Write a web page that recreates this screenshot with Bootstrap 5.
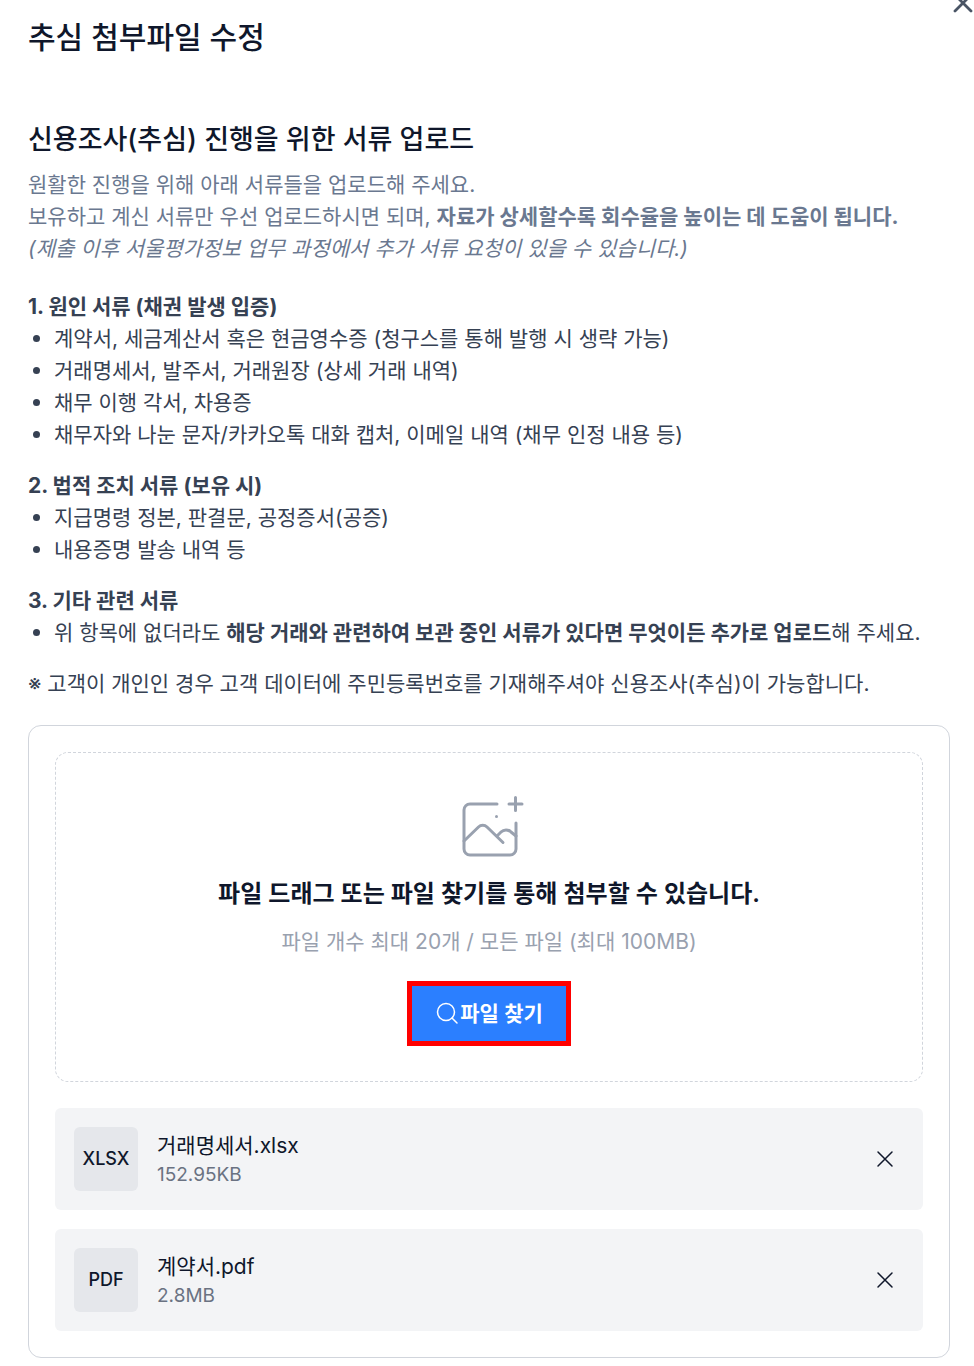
<!DOCTYPE html>
<html lang="ko">
<head>
<meta charset="utf-8">
<meta name="viewport" content="width=device-width, initial-scale=1">
<title>추심 첨부파일 수정</title>
<link rel="stylesheet" href="https://cdn.jsdelivr.net/npm/bootstrap@5.3.0/dist/css/bootstrap.min.css">
<style>
  body { font-family: Inter, "Noto Sans CJK KR", sans-serif; font-size: 21px; line-height: 32px; color: #364153; background: #fff; word-break: keep-all; }
  .page { padding: 17px 24px 8px 28px; }
  .icon-btn { padding: 0; border: 0; background: none; line-height: 0; color: #0f172b; }
  .close-page { position: absolute; top: -7px; right: 1px; color: #4a5565; }
  .page-title { font-size: 30px; line-height: 40px; font-weight: 500; color: #0f172b; margin-bottom: 63px; }
  .section-title { font-size: 27px; line-height: 40px; font-weight: 500; color: #0f172b; margin-bottom: 9px; }
  .intro { color: #6a7890; margin-bottom: 26px; }
  .doc-group { margin-bottom: 19px; }
  .doc-title { font-size: 21px; line-height: 32px; font-weight: 700; margin: 0; }
  .doc-list { list-style: none; padding-left: 26px; margin: 0; }
  .doc-list li::before { content: ""; display: inline-block; width: 7px; height: 7px; border-radius: 50%; background: currentColor; margin: 0 14px 0 -21px; vertical-align: 4px; }
  .notice { margin-bottom: 25px; }
  .upload-card { border: 1px solid #d1d5dc; border-radius: 13px; padding: 26px; }
  .drop-zone { border: 1px dashed #d1d5dc; border-radius: 13px; padding: 42px 24px 35px; margin-bottom: 26px; }
  .drop-title { font-size: 24px; line-height: 36px; font-weight: 600; color: #0f172b; margin: 17px 0 14px; }
  .drop-hint { color: #99a1af; margin-bottom: 23px; }
  .find-btn { font-size: 21px; line-height: 31px; font-weight: 600; color: #fff; background: #2b7fff; border: 5px solid #f00; border-radius: 0; padding: 12px 23px; }
  .find-btn:hover { color: #fff; background: #155dfc; border-color: #f00; }
  .file-list { gap: 19px; }
  .file-row { gap: 19px; padding: 19px 27px 19px 19px; background: #f3f4f6; border-radius: 6px; }
  .file-type { width: 64px; height: 64px; font-size: 18px; font-weight: 500; color: #0f172b; background: #e5e7eb; border-radius: 6px; }
  .file-name { line-height: 30px; color: #0f172b; }
  .file-size { font-size: 19px; line-height: 27px; color: #6a7282; }
</style>
</head>
<body>
<main class="page position-relative">
  <button type="button" class="icon-btn close-page" aria-label="닫기">
    <svg width="20" height="20" viewBox="0 0 20 20" fill="none" stroke="currentColor" stroke-width="2.8" stroke-linecap="round"><path d="M2 2l16 16M18 2L2 18"/></svg>
  </button>
  <h1 class="page-title">추심 첨부파일 수정</h1>

  <h2 class="section-title">신용조사(추심) 진행을 위한 서류 업로드</h2>
  <p class="intro">원활한 진행을 위해 아래 서류들을 업로드해 주세요.<br>보유하고 계신 서류만 우선 업로드하시면 되며, <strong>자료가 상세할수록 회수율을 높이는 데 도움이 됩니다.</strong><br><em>(제출 이후 서울평가정보 업무 과정에서 추가 서류 요청이 있을 수 있습니다.)</em></p>

  <section class="doc-group">
    <h3 class="doc-title">1. 원인 서류 (채권 발생 입증)</h3>
    <ul class="doc-list">
      <li>계약서, 세금계산서 혹은 현금영수증 (청구스를 통해 발행 시 생략 가능)</li>
      <li>거래명세서, 발주서, 거래원장 (상세 거래 내역)</li>
      <li>채무 이행 각서, 차용증</li>
      <li>채무자와 나눈 문자/카카오톡 대화 캡처, 이메일 내역 (채무 인정 내용 등)</li>
    </ul>
  </section>
  <section class="doc-group">
    <h3 class="doc-title">2. 법적 조치 서류 (보유 시)</h3>
    <ul class="doc-list">
      <li>지급명령 정본, 판결문, 공정증서(공증)</li>
      <li>내용증명 발송 내역 등</li>
    </ul>
  </section>
  <section class="doc-group">
    <h3 class="doc-title">3. 기타 관련 서류</h3>
    <ul class="doc-list">
      <li>위 항목에 없더라도 <strong>해당 거래와 관련하여 보관 중인 서류가 있다면 무엇이든 추가로 업로드</strong>해 주세요.</li>
    </ul>
  </section>
  <p class="notice">※ 고객이 개인인 경우 고객 데이터에 주민등록번호를 기재해주셔야 신용조사(추심)이 가능합니다.</p>

  <section class="upload-card">
    <div class="drop-zone d-flex flex-column align-items-center text-center">
      <svg width="64" height="64" viewBox="-1 0 64 64" fill="none" stroke="#99a1af" stroke-width="3" stroke-linecap="round" stroke-linejoin="round" overflow="visible" aria-hidden="true">
        <path d="M39 9H12a6 6 0 0 0-6 6v39a6 6 0 0 0 6 6h40a6 6 0 0 0 6-6V28"/>
        <path d="M51 9h13M57.500 2.500v13"/>
        <path d="M6 46l14.500-14a6 6 0 0 1 8.500 0L45 47.500"/>
        <path d="M39 41l4-4a7 7 0 0 1 10 0L58 41"/>
        <path d="M38.500 21.500v.1"/>
      </svg>
      <p class="drop-title">파일 드래그 또는 파일 찾기를 통해 첨부할 수 있습니다.</p>
      <p class="drop-hint">파일 개수 최대 20개 / 모든 파일 (최대 100MB)</p>
      <button type="button" class="btn find-btn d-inline-flex align-items-center">
        <svg width="25" height="25" viewBox="0 0 25 25" fill="none" stroke="currentColor" stroke-width="1.500" stroke-linecap="round" aria-hidden="true"><circle cx="11" cy="11" r="8.500"/><path d="M17 17l5 5"/></svg>파일 찾기
      </button>
    </div>

    <div class="file-list d-flex flex-column">
      <div class="file-row d-flex align-items-center">
        <div class="file-type d-flex align-items-center justify-content-center flex-shrink-0">XLSX</div>
        <div class="flex-grow-1">
          <div class="file-name">거래명세서.xlsx</div>
          <div class="file-size">152.95KB</div>
        </div>
        <button type="button" class="icon-btn" aria-label="거래명세서.xlsx 삭제">
          <svg width="22" height="22" viewBox="0 0 22 22" fill="none" stroke="currentColor" stroke-width="1.500" stroke-linecap="round"><path d="M4 4l14 14M18 4L4 18"/></svg>
        </button>
      </div>
      <div class="file-row d-flex align-items-center">
        <div class="file-type d-flex align-items-center justify-content-center flex-shrink-0">PDF</div>
        <div class="flex-grow-1">
          <div class="file-name">계약서.pdf</div>
          <div class="file-size">2.8MB</div>
        </div>
        <button type="button" class="icon-btn" aria-label="계약서.pdf 삭제">
          <svg width="22" height="22" viewBox="0 0 22 22" fill="none" stroke="currentColor" stroke-width="1.500" stroke-linecap="round"><path d="M4 4l14 14M18 4L4 18"/></svg>
        </button>
      </div>
    </div>
  </section>
</main>
<script src="https://cdn.jsdelivr.net/npm/bootstrap@5.3.0/dist/js/bootstrap.bundle.min.js"></script>
</body>
</html>
